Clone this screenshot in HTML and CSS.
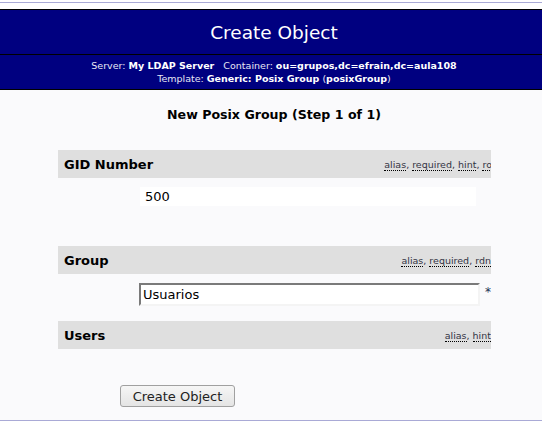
FILE: index.html
```html
<!DOCTYPE html>
<html>
<head>
<meta charset="utf-8">
<link rel="stylesheet" href="styles.css">
</head>
<body>
<div class="page">
  <div class="header">
    <div class="title">Create Object</div>
    <div class="info">
      <div>Server: <b>My LDAP Server</b> &nbsp; Container: <b>ou=grupos,dc=efrain,dc=aula108</b></div>
      <div>Template: <b>Generic: Posix Group</b> (<b>posixGroup</b>)</div>
    </div>
  </div>
  <div class="content">
    <div class="subtitle">New Posix Group (Step 1 of 1)</div>
    <div class="form">
      <div class="attr attr-gid">
        <span class="label">GID Number</span>
        <span class="hints"><abbr>alias</abbr>, <abbr>required</abbr>, <abbr>hint</abbr>, <abbr>ro</abbr></span>
      </div>
      <div class="value value-ro">
        <div class="ro-box">500</div>
      </div>
      <div class="attr attr-group">
        <span class="label">Group</span>
        <span class="hints"><abbr>alias</abbr>, <abbr>required</abbr>, <abbr>rdn</abbr></span>
      </div>
      <div class="value value-input">
        <input class="text-input" type="text" value="Usuarios">
        <span class="req">*</span>
      </div>
      <div class="attr attr-users">
        <span class="label">Users</span>
        <span class="hints"><abbr>alias</abbr>, <abbr>hint</abbr></span>
      </div>
    </div>
    <div class="actions">
      <button class="btn" type="button">Create Object</button>
    </div>
  </div>
</div>
</body>
</html>
```

FILE: styles.css
```css
html, body {
  margin: 0;
  padding: 0;
  background: #ffffff;
  font-family: "DejaVu Sans", sans-serif;
}

.page {
  margin-top: 2px;
  border-top: 1px solid #a9aad6;
  padding-top: 6px;
}

.header {
  background: #000080;
  color: #ffffff;
  border-top: 1px solid #000000;
  border-bottom: 1px solid #000000;
}

.title {
  height: 44px;
  display: flex;
  align-items: center;
  justify-content: center;
  padding-left: 6px;
  font-size: 18.5px;
  border-bottom: 1px solid #000000;
}

.info {
  height: 34px;
  display: flex;
  flex-direction: column;
  justify-content: center;
  align-items: center;
  padding-left: 6px;
  font-size: 9.5px;
  line-height: 13px;
  color: #e8e8f4;
}

.info b {
  color: #ffffff;
}

.content {
  background: #fafafc;
  border-bottom: 1px solid #a9aad6;
  padding-top: 17px;
  padding-bottom: 13px;
}

.subtitle {
  text-align: center;
  padding-left: 6px;
  font-weight: bold;
  font-size: 12.6px;
  line-height: 16px;
  color: #000000;
}

.form {
  margin-left: 58px;
  width: 433px;
  margin-top: 27px;
  overflow: hidden;
}

.attr {
  height: 28px;
  background: #dfdfdf;
  display: flex;
  align-items: center;
  padding-left: 6px;
}

.label {
  font-weight: bold;
  font-size: 13px;
  color: #000000;
}

.hints {
  margin-left: auto;
  white-space: nowrap;
  font-size: 9.5px;
  color: #333344;
  flex-shrink: 0;
  margin-right: 0;
}

.attr-gid .hints {
  margin-right: -1px;
}

.hints abbr {
  text-decoration: none;
  border-bottom: 1px dotted #000000;
}

.value {
  display: flex;
  align-items: center;
}

.value-ro {
  padding: 9px 0 40px 82px;
}

.ro-box {
  width: 331px;
  height: 19px;
  background: #ffffff;
  padding-left: 5px;
  font-size: 13px;
  line-height: 19px;
  color: #000000;
}

.value-input {
  padding: 9px 0 15px 81px;
}

.text-input {
  box-sizing: border-box;
  width: 341px;
  height: 23px;
  margin: 0;
  padding: 0 2px;
  font-family: "DejaVu Sans", sans-serif;
  font-size: 13px;
  color: #000000;
  background: #ffffff;
  border-style: solid;
  border-width: 2px;
  border-color: #7a7a7a #f4f4f4 #f4f4f4 #7a7a7a;
}

.req {
  margin-left: 5px;
  margin-top: -6px;
  font-size: 12px;
  color: #223355;
}

.actions {
  padding: 36px 0 0 120px;
}

.btn {
  box-sizing: border-box;
  width: 115px;
  height: 22px;
  padding: 0;
  font-family: "DejaVu Sans", sans-serif;
  font-size: 13px;
  color: #222222;
  background: linear-gradient(#f6f6f6, #e4e4e4);
  border: 1px solid #a0a0a0;
  border-radius: 3px;
}
```
